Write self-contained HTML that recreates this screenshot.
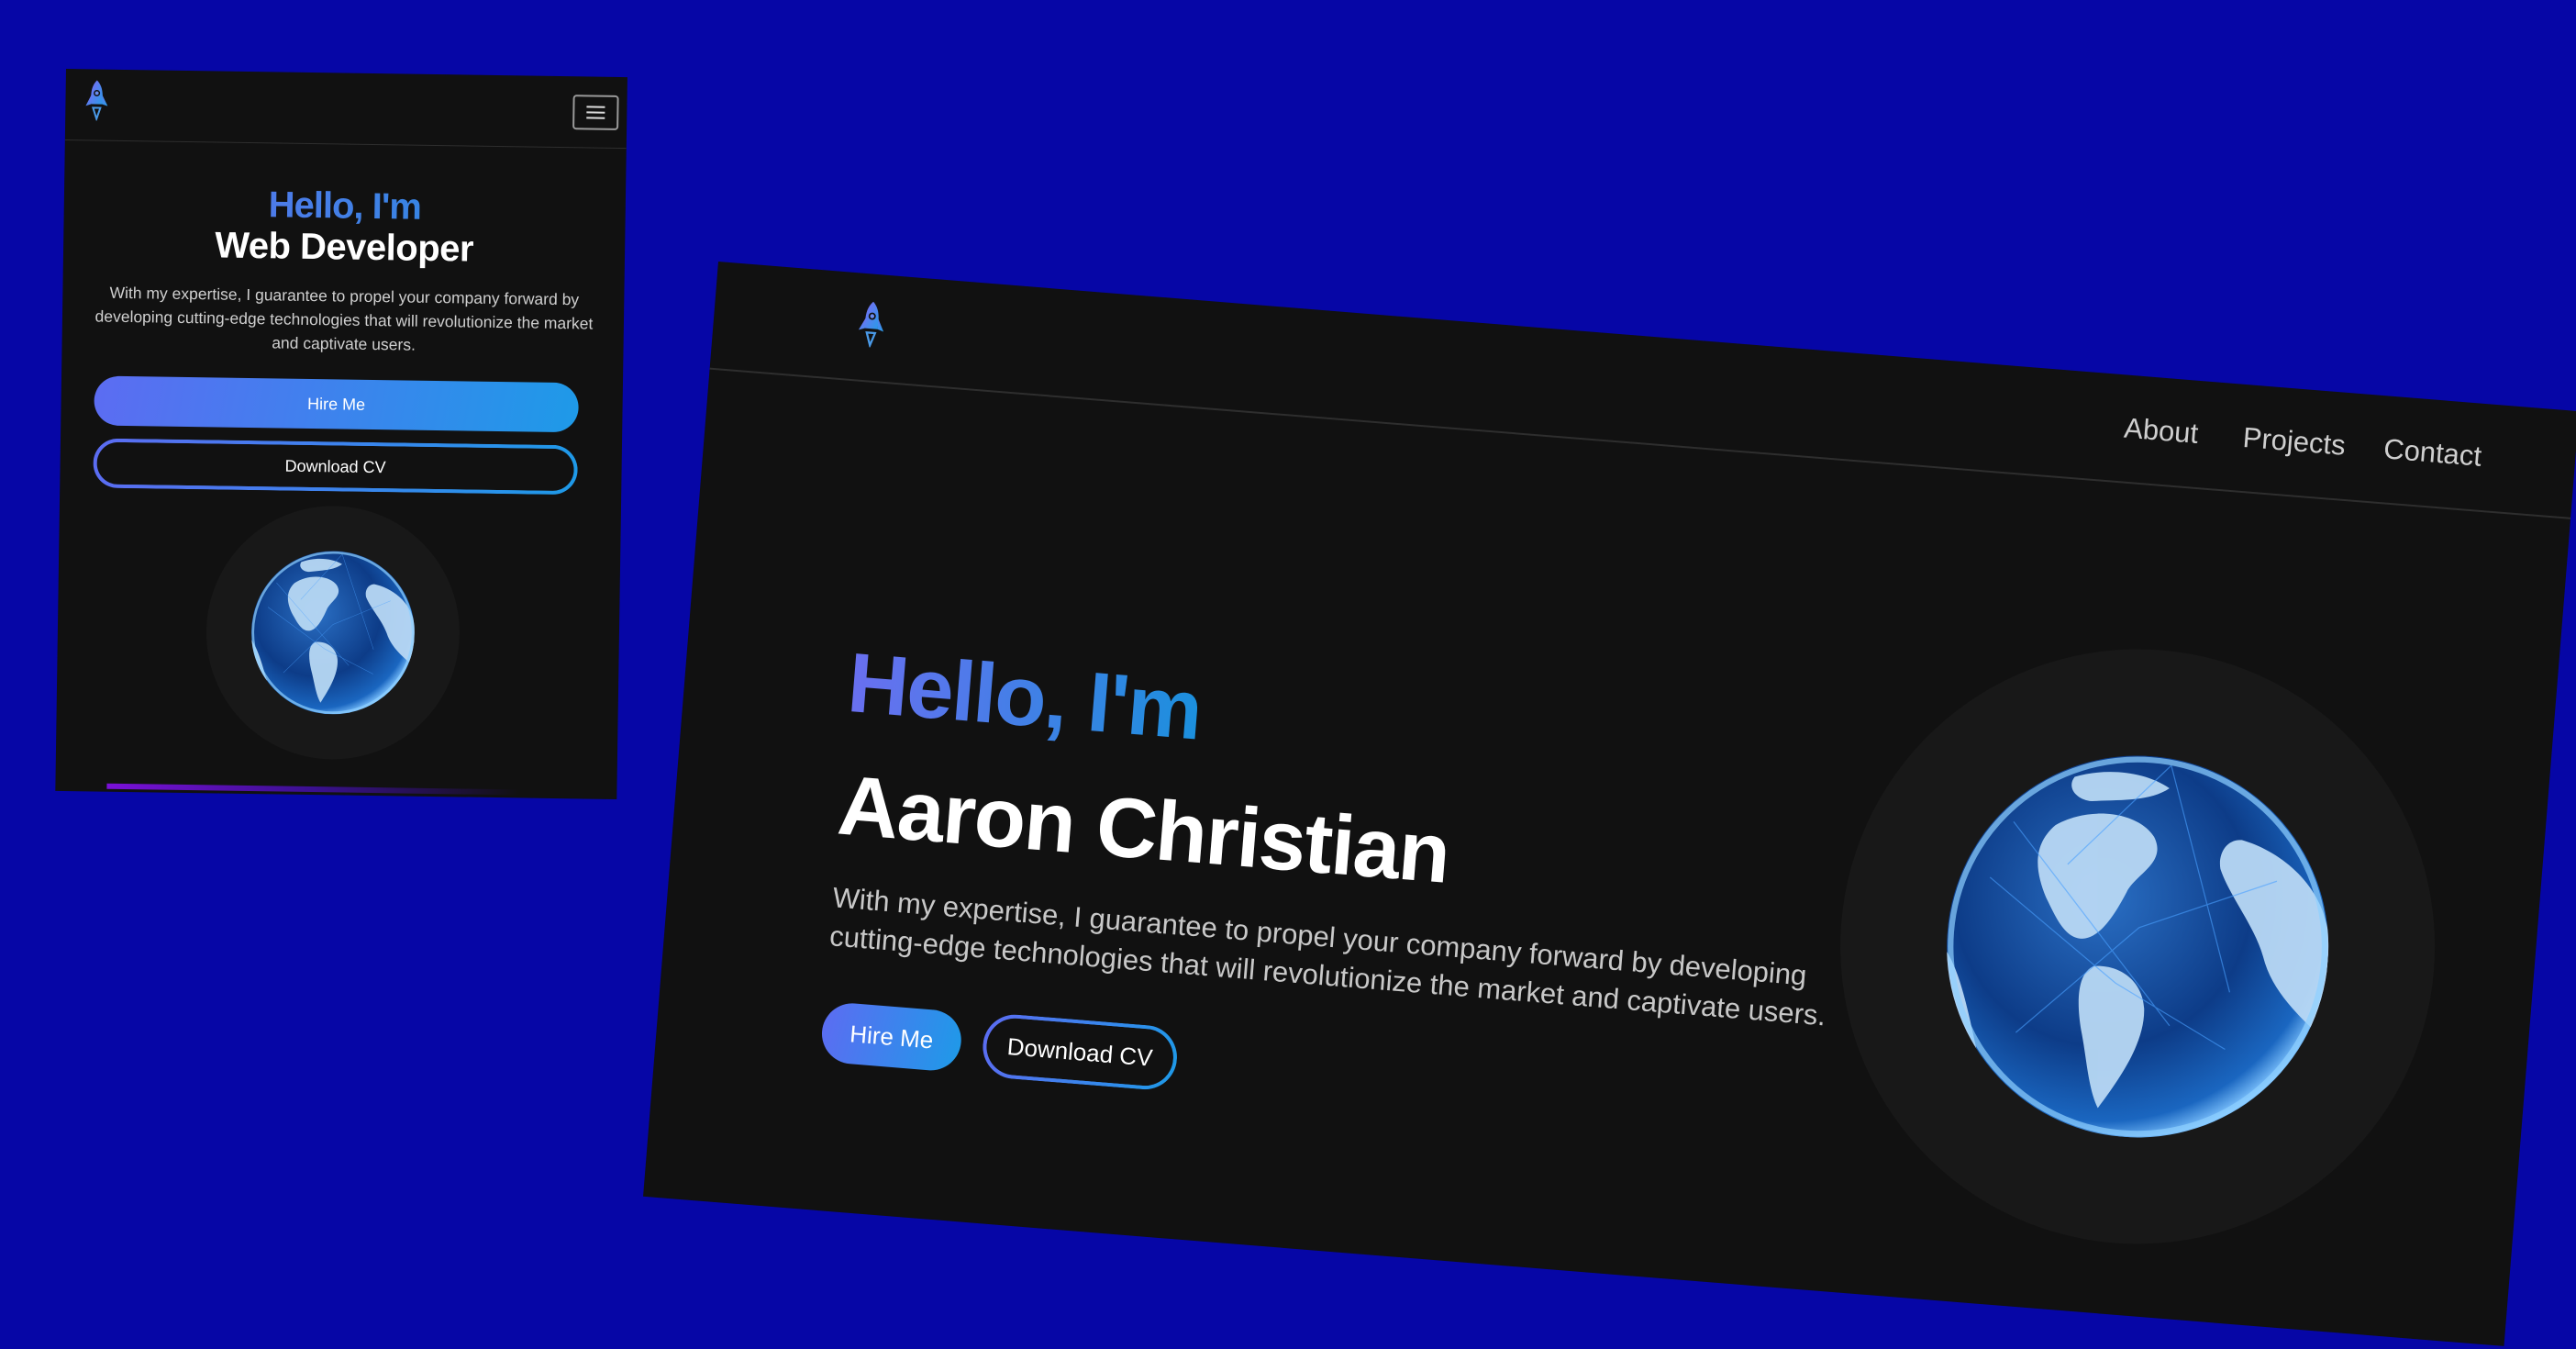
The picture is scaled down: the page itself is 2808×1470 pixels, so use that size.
<!DOCTYPE html>
<html><head><meta charset="utf-8"><style>
*{margin:0;padding:0;box-sizing:border-box}
body{width:2808px;height:1470px;background:#0606a6;overflow:hidden;position:relative;font-family:"Liberation Sans",sans-serif}
.m{position:absolute;background:#111;transform-origin:0 0;overflow:hidden}
.grad{background:linear-gradient(90deg,#6a6ff0,#1b90dd);-webkit-background-clip:text;background-clip:text;color:transparent}
.abs{position:absolute}
.hire{position:absolute;border-radius:999px;background:linear-gradient(100deg,#5c6cf2,#1e9ae8);color:#fff;display:flex;align-items:center;justify-content:center}
.dl{position:absolute;border-radius:999px;background:linear-gradient(#111,#111) padding-box,linear-gradient(100deg,#5c6cf2,#1e9ae8) border-box;border:4px solid transparent;color:#fff;display:flex;align-items:center;justify-content:center}
.ring{position:absolute;border-radius:50%;background:#181818}
</style></head><body>

<svg width="0" height="0" style="position:absolute">
<defs>
<radialGradient id="sea" cx="40%" cy="38%" r="65%">
<stop offset="0" stop-color="#2a6fc4"/><stop offset=".6" stop-color="#0d3c88"/><stop offset=".9" stop-color="#1a66c0"/><stop offset="1" stop-color="#7fc4ff"/>
</radialGradient>
<clipPath id="cp"><circle cx="100" cy="100" r="100"/></clipPath>
<symbol id="globe" viewBox="0 0 200 200">
<circle cx="100" cy="100" r="100" fill="url(#sea)"/>
<g clip-path="url(#cp)" fill="#b8d8f4" opacity=".95">
<path d="M52 40 C70 28 95 30 104 42 C112 55 96 62 92 72 C86 86 80 96 72 98 C62 100 56 88 50 78 C44 66 40 52 52 40Z"/>
<path d="M78 112 C92 110 104 118 106 132 C108 150 96 170 86 186 C80 176 78 160 74 146 C70 130 70 116 78 112Z"/>
<path d="M150 40 C170 44 196 60 200 90 L200 140 C188 130 172 118 166 100 C160 84 146 70 140 56 C138 48 142 40 150 40Z"/>
<path d="M60 14 C76 8 96 8 110 16 C100 24 84 24 70 26 C62 26 56 20 60 14Z"/>
<path d="M0 110 C8 120 14 140 20 160 L0 160Z"/>
</g>
<g stroke="#4aa0ff" stroke-width=".6" opacity=".6" fill="none">
<path d="M20 70 L90 120 L150 150 M40 150 L100 90 L170 60 M110 4 L60 60 M110 4 L150 120 M30 40 L120 140"/>
</g>
<circle cx="100" cy="100" r="98" fill="none" stroke="#8fd0ff" stroke-width="3" opacity=".7"/>
</symbol>
<symbol id="rocket" viewBox="0 0 24 44">
<defs><linearGradient id="rg" x1="0" y1="0" x2="1" y2="1"><stop offset="0" stop-color="#7a6cf5"/><stop offset="1" stop-color="#2a9ae8"/></linearGradient></defs>
<path d="M12 0 C18 6 19 14 18 26 L6 26 C5 14 6 6 12 0Z" fill="url(#rg)"/>
<path d="M6 16 L0 28 L6 26Z M18 16 L24 28 L18 26Z" fill="url(#rg)"/>
<circle cx="12" cy="14" r="3.5" fill="#111"/><circle cx="12" cy="14" r="2" fill="#6a8cf0"/>
<path d="M8 30 L12 42 L16 30Z" fill="none" stroke="#4a9ae8" stroke-width="2"/>
</symbol>
</defs></svg>

<!-- Mobile mockup -->
<div class="m" style="left:72px;top:75px;width:612px;height:787px;transform:rotate(0.85deg)">
<svg class="abs" style="left:22px;top:12px" width="24" height="44"><use href="#rocket"/></svg>
<div class="abs" style="left:0;top:77px;width:612px;height:1px;background:#2e2e2e"></div>
<div class="abs" style="left:553px;top:20px;width:50px;height:38px;border:2px solid #9a9a9a;border-radius:4px"></div>
<div class="abs" style="left:568px;top:32px;width:20px;height:2px;background:#ddd;box-shadow:0 6px 0 #ddd,0 12px 0 #ddd"></div>
<div class="abs grad" style="left:0;width:612px;top:122px;text-align:center;font-size:40px;font-weight:bold;line-height:46px;letter-spacing:-1px"><span>Hello, I'm</span></div>
<div class="abs" style="left:0;width:612px;top:166px;text-align:center;font-size:40px;font-weight:bold;color:#fff;line-height:48px;letter-spacing:-0.5px">Web Developer</div>
<div class="abs" style="left:34px;width:546px;top:230px;text-align:center;font-size:17.5px;color:#cfcfcf;line-height:26px">With my expertise, I guarantee to propel your company forward by developing cutting-edge technologies that will revolutionize the market and captivate users.</div>
<div class="hire" style="left:36px;top:334px;width:528px;height:54px;font-size:18px">Hire Me</div>
<div class="dl" style="left:36px;top:402px;width:528px;height:54px;font-size:18px">Download CV</div>
<div class="ring" style="left:162px;top:472px;width:276px;height:276px"></div>
<svg class="abs" style="left:211px;top:521px" width="178" height="178"><use href="#globe"/></svg>
<div class="abs" style="left:56px;top:778px;width:450px;height:6px;background:linear-gradient(90deg,#7a10d8,#3a1090 50%,#111)"></div>
</div>

<!-- Desktop mockup -->
<div class="m" style="left:783px;top:285px;width:2035px;height:1022px;transform:rotate(4.6deg)">
<svg class="abs" style="left:158px;top:30px" width="28" height="50"><use href="#rocket"/></svg>
<div class="abs" style="left:0;top:116px;width:2035px;height:2px;background:#2e2e2e"></div>
<div class="abs" style="left:1542px;top:40px;font-size:31px;color:#cfcfcf">About</div>
<div class="abs" style="left:1672px;top:40px;font-size:31px;color:#cfcfcf">Projects</div>
<div class="abs" style="left:1826px;top:40px;font-size:31px;color:#cfcfcf">Contact</div>
<div class="abs grad" style="left:178px;top:396px;font-size:92px;font-weight:bold;line-height:100px;letter-spacing:-2px"><span>Hello, I'm</span></div>
<div class="abs" style="left:178px;top:528px;font-size:92px;font-weight:bold;line-height:104px;color:#fff;letter-spacing:-1.5px">Aaron Christian</div>
<div class="abs" style="left:180px;top:660px;width:1150px;font-size:31px;line-height:42px;color:#c8c8c8">With my expertise, I guarantee to propel your company forward by developing cutting-edge technologies that will revolutionize the market and captivate users.</div>
<div class="hire" style="left:180px;top:794px;width:152px;height:66px;font-size:26px">Hire Me</div>
<div class="dl" style="left:356px;top:792px;width:212px;height:70px;font-size:26px">Download CV</div>
<div class="ring" style="left:1278px;top:296px;width:648px;height:648px"></div>
<svg class="abs" style="left:1394px;top:412px" width="416" height="416"><use href="#globe"/></svg>
</div>
</body></html>
